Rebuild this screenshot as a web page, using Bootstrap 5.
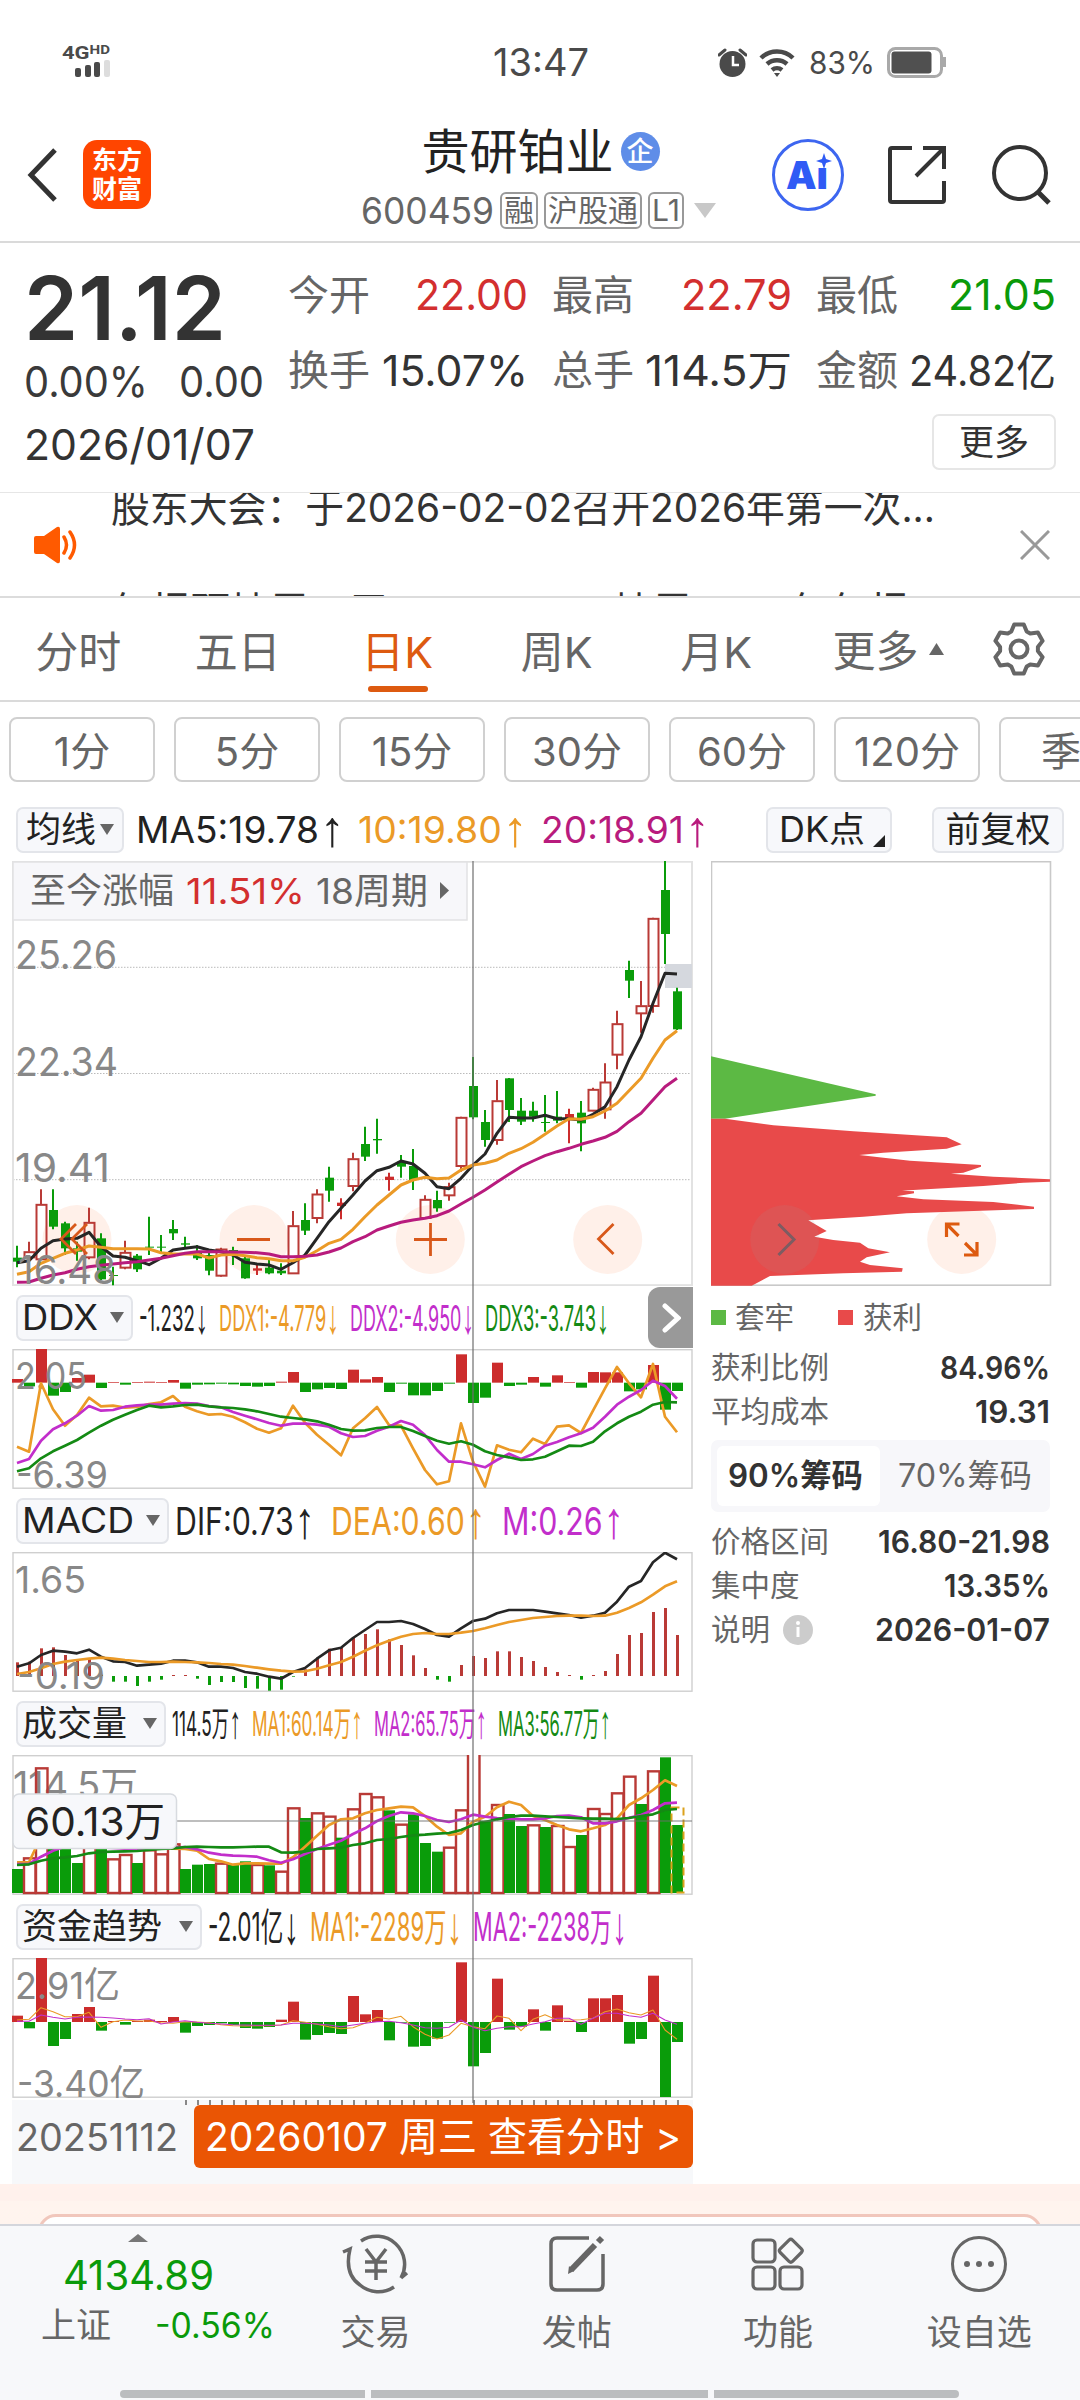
<!DOCTYPE html>
<html lang="zh-CN">
<head>
<meta charset="utf-8">
<meta name="viewport" content="width=device-width, initial-scale=1">
<title>贵研铂业 600459</title>
<link rel="stylesheet" href="https://cdn.jsdelivr.net/npm/bootstrap@5.3.0/dist/css/bootstrap.min.css">
<style>
body{width:1080px;height:2400px;overflow:hidden;background:#fff;color:#333;font-family:Inter,"Noto Sans CJK SC",sans-serif;line-height:1}
svg{display:block;flex:none}
.fit{display:inline-block;white-space:nowrap;flex:none;transform-origin:0 50%}
.c-grey{color:#666}.c-red{color:#d32f2f}.c-green{color:#0a9a0a}.c-orange{color:#eb9a27}.c-mag{color:#b81b7d}.c-pur{color:#c22ecb}.c-dgreen{color:#148a14}.c-ink{color:#222}
.arw{font-family:"Liberation Sans",sans-serif;margin-left:.02em;font-size:1.35em;line-height:0;vertical-align:-.06em}
.statusbar{height:124px;padding-left:62px;color:#4a4a4a}
.sig{width:48px;height:34px}
.sig-t{font:700 19px/15px "Roboto","Liberation Sans",sans-serif}
.sig-t sup{font-size:13px;top:-.35em;line-height:0}
.clock{font-size:38px;margin-left:383px}
.st-right{margin-left:129px}
.topbar{height:119px;padding:0 0 16px 27px;border-bottom:2px solid #dadada}
.em-logo{width:68px;height:69px;border-radius:14px;background:#ff4500;color:#fff;font-size:25px;line-height:29px;font-weight:600;margin-left:24px}
.title-col{width:353px;margin-left:211px;padding-top:7px;gap:16px}
.stock{font-size:48px;color:#222;white-space:nowrap}
.qi{width:39px;height:39px;border-radius:50%;background:#5f8de8;color:#fff;font-size:27px;font-weight:500;margin-left:7px}
.code{font-size:37px;color:#666;height:37px;gap:6px;white-space:nowrap}
.tagbox{border:2px solid #999;border-radius:6px;height:37px;font-size:30px;padding:0 2px;flex:none}
.tri-d{width:0;height:0;border:7px solid transparent;border-bottom:0;border-top:11px solid #666}
.quote{height:250px;padding:21px 24px 0 24px;border-bottom:1px solid #e6e6e6}
.q-top{height:150px}
.price{font-size:88px;font-weight:600;height:88px}
.chg{font-size:42px;margin-top:9px;gap:31px;color:#3a3a3a}
.q-grid{display:grid;grid-template-columns:repeat(3,240px);column-gap:24px;row-gap:33px;width:768px;margin-top:10px;height:118px}
.q-cell{font-size:42px;height:42px}
.q-cell .lab{font-size:41px;color:#666}
.q-date{font-size:43px;padding-top:5px}
.more-btn{width:124px;height:56px;border:2px solid #e6e6e6;border-radius:7px;font-size:35px;background:#fff;color:#333}
.notice{height:105px;border-bottom:2px solid #dcdcdc;overflow:hidden;padding:0 30px 0 33px}
.n-lines{height:103px;overflow:hidden;margin-left:32px;width:860px;font-size:40px}
.n-line{height:104px;flex:none}
.n-line:first-child{margin-top:-5px}
.tabs-k{height:104px;border-bottom:2px solid #dadada;font-size:43px;color:#666;white-space:nowrap}
.tab-k{width:159.5px;height:100%;position:relative;flex:none;padding-top:6px;padding-right:3px}
.tab-k.on{color:#dd5a10}
.tab-k.on::after{content:"";position:absolute;left:49px;bottom:8px;width:60px;height:6px;border-radius:3px;background:#dd5a10}
.mins{padding:15px 0 0 9px;gap:19px;overflow:hidden;font-size:40px;color:#666}
.min-btn{width:146px;height:65px;border:2px solid #d0d0d0;border-radius:8px;flex:none;padding-top:4px}
.ma-row{height:79px;padding:16px 16px 0 16px;font-size:37px}
.chip{background:#f7f8fb;border:2px solid #e3e5ea;border-radius:7px;height:46px;font-size:35px;color:#222;flex:none;white-space:nowrap}
.left-col{width:693px;padding-left:12px;position:relative}
.cross-v{position:absolute;left:472px;top:0;width:2px;height:1242px;background:rgba(110,110,110,.6);z-index:3}
.ind-row{height:63px;padding-left:4px;font-size:36px;position:relative}
.ind-chip{padding:0 7px 0 4px;justify-content:space-between;margin-right:6px}
.next-btn{position:absolute;right:0;top:1px;width:45px;height:61px;background:#999;border-radius:12px 0 0 12px;z-index:2}
.axis{height:84px;margin-top:2px;background:#f7f8fa}
.axis-in{padding-left:4px;height:63px;font-size:38px;color:#666}
.day-btn{width:499px;height:63px;margin-left:16px;background:#ea5504;color:#fff;border-radius:6px;font-size:40px;padding-left:11px}
.right-col{padding-left:18px;width:387px}
.legend{height:60px;font-size:29.5px;color:#666;padding-top:3px}
.sq{width:15px;height:15px}
.st-row{height:44px;width:339px;font-size:29.5px;color:#666}
.st-row b{font-size:31.5px;font-weight:600;color:#333}
.seg{width:339px;height:72px;background:#f7f7fa;border-radius:7px;padding:6px;font-size:32px;margin:6px 0 8px;color:#666}
.seg-on{width:163px;height:60px;background:#fff;border-radius:6px;color:#333;font-weight:600;padding-left:11px}
.promo{height:40px;background:linear-gradient(#fff1ec 0,#fff1ec 17px,#fff4ee 17px);padding:30px 38px 0;overflow:hidden}
.promo-card{height:60px;border:3px solid #f1c7bc;border-radius:18px;background:#fff}
.bottombar{height:176px;border-top:2px solid #d4d6dc;background:#f7f8fa;color:#666}
.idx{width:275px;padding-top:8px;white-space:nowrap}
.nav-c{width:201.3px;font-size:35px;padding-top:8px}
.nav-c span{margin-top:21px}
.home{height:8px;padding:0 120px;gap:6px}
.home i{background:#bbbdbf;height:8px}
.home i:first-child{width:245px;border-radius:4px 0 0 4px}.home i:nth-child(2){width:337px}.home i:last-child{width:245px;border-radius:0 4px 4px 0}
</style>
<script src="https://cdn.jsdelivr.net/npm/bootstrap@5.3.0/dist/js/bootstrap.bundle.min.js"></script>
</head>
<body>
<div class="statusbar d-flex align-items-center">
  <div class="sig"><div class="sig-t"><span class="fit" data-w="48">4G<sup>HD</sup></span></div>
    <svg width="48" height="17" viewBox="0 0 48 17"><g fill="#4a4a4a"><rect x="13" y="8" width="6" height="9" rx="2"/><rect x="23" y="5" width="6" height="12" rx="2"/><rect x="32" y="2" width="6" height="15" rx="2"/><rect x="42" y="0" width="6" height="17" rx="2" fill="#ddd"/></g></svg></div>
  <div class="clock"><span class="fit" data-w="96">13:47</span></div>
  <div class="st-right d-flex align-items-center">
    <svg width="29" height="29" viewBox="0 0 29 29"><circle cx="14.500" cy="16" r="13" fill="#4a4a4a"/><path d="M1 7 7 2M28 7 22 2" stroke="#4a4a4a" stroke-width="3" stroke-linecap="round"/><path d="M15 8v9h6" fill="none" stroke="#fff" stroke-width="2.500"/></svg>
    <svg width="36" height="29" viewBox="0 0 36 29" style="margin:0 14px 0 12px" fill="none" stroke="#4a4a4a" stroke-width="4.500"><path d="M2 10a23 23 0 0 1 32 0M8 16a15 15 0 0 1 20 0M13 22a8 8 0 0 1 10 0"/><path d="M15 25h6l-3 4z" fill="#4a4a4a" stroke="none"/></svg>
    <span class="fit" data-w="66" style="font-size:31px">83%</span>
    <svg width="60" height="31" viewBox="0 0 60 31" style="margin-left:12px"><rect x="1.500" y="1.500" width="53" height="28" rx="7" fill="none" stroke="#a9a9a9" stroke-width="3"/><rect x="4.500" y="4.500" width="40" height="22" rx="3" fill="#505050"/><path d="M57.500 10v10" stroke="#a9a9a9" stroke-width="3"/></svg>
  </div>
</div>

<div class="topbar d-flex align-items-center">
  <svg width="32" height="56" viewBox="0 0 32 56"><path d="M28 3 4 28l24 25" fill="none" stroke="#333" stroke-width="5"/></svg>
  <div class="em-logo d-flex flex-column align-items-center justify-content-center"><span>东方</span><span>财富</span></div>
  <div class="title-col d-flex flex-column align-items-center">
    <div class="stock d-flex align-items-center ps-1">贵研铂业<span class="qi d-flex align-items-center justify-content-center">企</span></div>
    <div class="code d-flex align-items-center"><span class="fit" data-w="133">600459</span>
      <span class="tagbox d-flex align-items-center">融</span><span class="tagbox d-flex align-items-center">沪股通</span><span class="tagbox d-flex align-items-center">L1</span>
      <svg width="22" height="15" viewBox="0 0 22 15" class="ms-1"><path d="M0 0h22L11 15z" fill="#c8c8c8"/></svg></div>
  </div>
  <svg width="74" height="74" viewBox="0 0 74 74" style="margin-left:56px"><circle cx="37" cy="37" r="34.500" fill="#fff" stroke="#3d66f0" stroke-width="3"/><text x="15" y="51" font-family="Inter" font-weight="900" font-size="38" fill="#2f5bf5" textLength="42" lengthAdjust="spacingAndGlyphs">Aı</text><path d="M53 15l2 6 6 2-6 2-2 6-2-6-6-2 6-2z" fill="#2f5bf5"/></svg>
  <svg width="60" height="60" viewBox="0 0 60 60" style="margin-left:42px" fill="none" stroke="#333" stroke-width="4"><path d="M25 3H5q-2 0-2 2v50q0 2 2 2h50q2 0 2-2V36M36 3h21v21M57 3 29 31"/></svg>
  <svg width="60" height="60" viewBox="0 0 60 60" style="margin-left:45px" fill="none" stroke="#333" stroke-width="4"><circle cx="28" cy="28" r="26"/><path d="M46 47 57 58" stroke-width="5"/></svg>
</div>

<div class="quote">
  <div class="q-top d-flex justify-content-between">
    <div>
      <div class="price"><span class="fit" data-w="202">21.12</span></div>
      <div class="chg d-flex"><span class="fit" data-w="124">0.00%</span><span class="fit" data-w="85">0.00</span></div>
    </div>
    <div class="q-grid">
      <div class="q-cell d-flex justify-content-between align-items-center"><span class="lab">今开</span><span class="fit c-red" data-w="113">22.00</span></div>
      <div class="q-cell d-flex justify-content-between align-items-center"><span class="lab">最高</span><span class="fit c-red" data-w="111">22.79</span></div>
      <div class="q-cell d-flex justify-content-between align-items-center"><span class="lab">最低</span><span class="fit c-green" data-w="108">21.05</span></div>
      <div class="q-cell d-flex justify-content-between align-items-center"><span class="lab">换手</span><span class="fit" data-w="146">15.07%</span></div>
      <div class="q-cell d-flex justify-content-between align-items-center"><span class="lab">总手</span><span class="fit" data-w="147">114.5万</span></div>
      <div class="q-cell d-flex justify-content-between align-items-center"><span class="lab">金额</span><span class="fit" data-w="147">24.82亿</span></div>
    </div>
  </div>
  <div class="d-flex justify-content-between align-items-center"><div class="q-date"><span class="fit" data-w="231">2026/01/07</span></div>
    <button class="more-btn btn p-0">更多</button></div>
</div>

<div class="notice d-flex align-items-center">
  <svg width="46" height="38" viewBox="0 0 46 38"><path d="M1 12q0-2 2-2h8L24 1q3-1 3 2v32q0 3-3 2L11 28H3q-2 0-2-2z" fill="#ff5a00"/><path d="M31 11q5 8 0 16M37 6q9 13 0 26" fill="none" stroke="#ff5a00" stroke-width="3.500" stroke-linecap="round"/></svg>
  <div class="n-lines d-flex flex-column"><div class="n-line"><span class="fit" data-w="824">股东大会：于2026-02-02召开2026年第一次...</span></div><div class="n-line"><span class="fit" data-w="798">年报预披露：于2026-03-31披露2025年年报</span></div></div>
  <svg width="30" height="30" viewBox="0 0 30 30" class="ms-auto"><path d="M1 1 29 29M29 1 1 29" stroke="#999" stroke-width="3"/></svg>
</div>

<div class="tabs-k d-flex align-items-center">
  <div class="tab-k d-flex align-items-center justify-content-center">分时</div><div class="tab-k d-flex align-items-center justify-content-center">五日</div><div class="tab-k on d-flex align-items-center justify-content-center">日K</div><div class="tab-k d-flex align-items-center justify-content-center">周K</div><div class="tab-k d-flex align-items-center justify-content-center">月K</div>
  <span class="pt-1" style="margin-left:35px">更多</span><svg width="15" height="12" viewBox="0 0 15 12" style="margin-left:10px"><path d="M7.500 0 15 12H0z" fill="#666"/></svg>
  <svg id="gear" width="54" height="54" viewBox="-27 -27 54 54" class="ms-5" fill="none" stroke="#666" stroke-width="4" stroke-linejoin="round"></svg>
</div>
<div class="mins d-flex">
  <div class="min-btn d-flex align-items-center justify-content-center">1分</div><div class="min-btn d-flex align-items-center justify-content-center">5分</div><div class="min-btn d-flex align-items-center justify-content-center">15分</div><div class="min-btn d-flex align-items-center justify-content-center">30分</div><div class="min-btn d-flex align-items-center justify-content-center">60分</div><div class="min-btn d-flex align-items-center justify-content-center">120分</div><div class="min-btn d-flex align-items-center ps-4"><span class="ps-3">季</span></div>
</div>
<div class="ma-row d-flex align-items-center">
  <div class="chip d-flex align-items-center px-2" style="width:108px">均线<i class="tri-d ms-1"></i></div>
  <div class="d-flex" style="gap:13px;margin-left:12px"><span class="fit c-ink" data-w="209">MA5:19.78<span class="arw">↑</span></span><span class="fit c-orange" data-w="170">10:19.80<span class="arw">↑</span></span><span class="fit c-mag" data-w="169">20:18.91<span class="arw">↑</span></span></div>
  <div class="chip d-flex align-items-center ms-auto" style="width:126px;padding-left:11px"><span class="fit" data-w="86">DK点</span><svg width="12" height="12" viewBox="0 0 12 12" class="align-self-end ms-2 mb-1"><path d="M12 0v12H0z" fill="#222"/></svg></div>
  <div class="chip d-flex align-items-center justify-content-center" style="width:132px;margin-left:40px">前复权</div>
</div>

<div class="d-flex">
  <div class="left-col">
    <div class="cross-v"></div>
    <svg id="kline" width="681" height="425" viewBox="12 861 681 425"></svg>
    <div class="ind-row d-flex align-items-center"><div class="chip ind-chip d-flex align-items-center" style="width:117px"><span class="fit" data-w="76">DDX</span><i class="tri-d"></i></div>
      <div class="d-flex" style="gap:11px"><span class="fit c-ink" data-w="69">-1.232<span class="arw">↓</span></span><span class="fit c-orange" data-w="120">DDX1:-4.779<span class="arw">↓</span></span><span class="fit c-pur" data-w="124">DDX2:-4.950<span class="arw">↓</span></span><span class="fit c-dgreen" data-w="124">DDX3:-3.743<span class="arw">↓</span></span></div>
      <div class="next-btn d-flex align-items-center justify-content-center"><svg width="20" height="32" viewBox="0 0 20 32"><path d="M4 4 17 16 4 28" fill="none" stroke="#fff" stroke-width="5" stroke-linecap="round"/></svg></div></div>
    <svg id="ddx" width="681" height="140" viewBox="12 1349 681 140"></svg>
    <div class="ind-row d-flex align-items-center"><div class="chip ind-chip d-flex align-items-center" style="width:153px"><span class="fit" data-w="112">MACD</span><i class="tri-d"></i></div>
      <div class="d-flex" style="gap:16px;font-size:38px"><span class="fit c-ink" data-w="140">DIF:0.73<span class="arw">↑</span></span><span class="fit c-orange" data-w="155">DEA:0.60<span class="arw">↑</span></span><span class="fit c-pur" data-w="122">M:0.26<span class="arw">↑</span></span></div></div>
    <svg id="macd" width="681" height="140" viewBox="12 1552 681 140"></svg>
    <div class="ind-row d-flex align-items-center"><div class="chip ind-chip d-flex align-items-center" style="width:150px"><span>成交量</span><i class="tri-d"></i></div>
      <div class="d-flex" style="gap:11px;font-size:34px"><span class="fit c-ink" data-w="69">114.5万<span class="arw">↑</span></span><span class="fit c-orange" data-w="111">MA1:60.14万<span class="arw">↑</span></span><span class="fit c-pur" data-w="113">MA2:65.75万<span class="arw">↑</span></span><span class="fit c-dgreen" data-w="113">MA3:56.77万<span class="arw">↑</span></span></div></div>
    <svg id="vol" width="681" height="140" viewBox="12 1755 681 140"></svg>
    <div class="ind-row d-flex align-items-center"><div class="chip ind-chip d-flex align-items-center" style="width:186px"><span>资金趋势</span><i class="tri-d"></i></div>
      <div class="d-flex" style="gap:11px;font-size:39px"><span class="fit c-ink" data-w="91">-2.01亿<span class="arw">↓</span></span><span class="fit c-orange" data-w="152">MA1:-2289万<span class="arw">↓</span></span><span class="fit c-pur" data-w="154">MA2:-2238万<span class="arw">↓</span></span></div></div>
    <svg id="fund" width="681" height="140" viewBox="12 1958 681 140"></svg>
    <div class="axis"><svg id="ticks" width="681" height="5" viewBox="12 2100 681 5"></svg>
      <div class="axis-in d-flex align-items-center"><span class="fit" data-w="162">20251112</span><div class="day-btn d-flex align-items-center"><span class="fit" data-w="476">20260107 周三 查看分时 &gt;</span></div></div></div>
  </div>
  <div class="right-col">
    <svg id="chips" width="341" height="425" viewBox="711 861 341 425"></svg>
    <div class="legend d-flex align-items-center"><i class="sq" style="background:#5cb944"></i><span style="margin-left:9px">套牢</span><i class="sq" style="background:#e84a4a;margin-left:44px"></i><span style="margin-left:10px">获利</span></div>
    <div class="st-row d-flex align-items-center justify-content-between">获利比例<b class="fit" data-w="110">84.96%</b></div>
    <div class="st-row d-flex align-items-center justify-content-between">平均成本<b class="fit" data-w="75">19.31</b></div>
    <div class="seg d-flex align-items-center"><div class="seg-on d-flex align-items-center"><span class="fit" data-w="135">90%筹码</span></div><span class="fit" style="margin-left:18px" data-w="134">70%筹码</span></div>
    <div class="st-row d-flex align-items-center justify-content-between">价格区间<b class="fit" data-w="172">16.80-21.98</b></div>
    <div class="st-row d-flex align-items-center justify-content-between">集中度<b class="fit" data-w="106">13.35%</b></div>
    <div class="st-row d-flex align-items-center">说明<svg width="30" height="30" viewBox="0 0 30 30" style="margin-left:13px"><circle cx="15" cy="15" r="15" fill="#ccc"/><path d="M15 12v10" stroke="#fff" stroke-width="3"/><circle cx="15" cy="8" r="2" fill="#fff"/></svg><b class="fit ms-auto" data-w="175">2026-01-07</b></div>
  </div>
</div>

<div class="promo"><div class="promo-card"></div></div>
<div class="bottombar d-flex flex-column">
  <div class="d-flex" style="height:164px">
    <div class="idx"><svg width="20" height="8" viewBox="0 0 20 8" style="margin-left:128px"><path d="M10 0 20 8H0z" fill="#777"/></svg>
      <div class="c-green" style="font-size:41px;margin:13px 0 0 63px"><span class="fit" data-w="151">4134.89</span></div>
      <div class="d-flex" style="font-size:35px;margin:12px 0 0 41px"><span>上证</span><span class="fit c-green" style="margin-left:44px" data-w="120">-0.56%</span></div></div>
    <div class="nav-c d-flex flex-column align-items-center"><svg width="68" height="60" viewBox="0 0 68 60" fill="none" stroke="#666" stroke-width="3.500"><path d="M19 7A28 28 0 0 1 59 44M1 18 8 15Q2 40 18 51A28 28 0 0 0 52 53M59 44l6-5" /><path d="M24 15 34 28 44 15M34 28V46M23 28H45M23 37H45"/></svg><span>交易</span></div>
    <div class="nav-c d-flex flex-column align-items-center"><svg width="60" height="60" viewBox="0 0 60 60" fill="none" stroke="#666" stroke-width="3.500"><path d="M42 4H10Q4 4 4 10V50Q4 56 10 56H50Q56 56 56 50V20"/><path d="M24 36 48 11" stroke-width="6"/><path d="M21 40l1-8 5 5z" fill="#666" stroke="none"/><path d="M51 8l4-4" stroke-width="6"/></svg><span>发帖</span></div>
    <div class="nav-c d-flex flex-column align-items-center"><svg width="60" height="60" viewBox="0 0 60 60" fill="none" stroke="#666" stroke-width="3.200"><rect x="5" y="6" width="22" height="22" rx="4"/><rect x="5" y="33" width="22" height="22" rx="4"/><rect x="32" y="33" width="22" height="22" rx="4"/><rect x="34" y="8" width="17.500" height="17.500" rx="2.500" transform="rotate(45 42.800 16.800)"/></svg><span>功能</span></div>
    <div class="nav-c d-flex flex-column align-items-center"><svg width="60" height="60" viewBox="0 0 60 60"><circle cx="30" cy="30" r="26.500" fill="none" stroke="#666" stroke-width="3"/><g fill="#666"><circle cx="18" cy="30" r="3"/><circle cx="30" cy="30" r="3"/><circle cx="42" cy="30" r="3"/></g></svg><span>设自选</span></div>
  </div>
  <div class="home d-flex"><i></i><i></i><i></i></div>
</div>

<script>
// Squeeze or stretch each numeric label to the width of its slot
document.querySelectorAll('.fit').forEach(function(e){
  var w=+e.dataset.w,m=e.getBoundingClientRect().width;
  e.style.transform='scaleX('+(w/m)+')';e.style.marginRight=(w-m)+'px';
});
var G='#0a9c0a',R='#b93a36',RF='#cc2c2c',OR='#eb9a27',BK='#262626',MG='#b81b7d',PU='#c22ecb',GN='#148a14';
function X(i){return 17+12*i}
function put(id,s){document.getElementById(id).innerHTML=s}
function line(a,y0,c,w){return '<polyline fill="none" stroke="'+c+'" stroke-width="'+w+'" stroke-linejoin="round" points="'+a.map(function(v,i){return X(i)+','+(y0+v/3).toFixed(1)}).join(' ')+'"/>'}
function rect(x,y,w,h,f,ex){return '<rect x="'+x+'" y="'+y.toFixed(2)+'" width="'+w+'" height="'+Math.max(h,.7).toFixed(2)+'" fill="'+f+'" '+(ex||'')+'/>'}
function label(t,x,y,w,s,c){return '<text x="'+(x-1)+'" y="'+y+'" font-size="'+(s||38)+'" fill="'+(c||'#888')+'" textLength="'+(w+2)+'" lengthAdjust="spacingAndGlyphs">'+t+'</text>'}
function frame(y,h,c,w){return '<rect x="13" y="'+(y+.7)+'" width="679" height="'+(h-1.5)+'" fill="none" stroke="'+c+'" stroke-width="'+w+'"/>'}
function bars(a,y0,z,w){return a.map(function(v,i){var up=v<z,t=up?v:z;return rect(X(i)-(w==3?1:5),y0+t/3,w,Math.abs(v-z)/3,up?(w==3?R:RF):G)}).join('')}

// Daily candles: kind, high, body top, body bottom, low
var K=[['g',1187,1223,1235,1252],['r',1175,1205,1222,1228],['r',1018,1063,1228,1230],['g',1018,1080,1130,1138],['g',1115,1120,1195,1215],['g',1175,1195,1205,1232],['r',1073,1117,1222,1228],['g',1150,1165,1288,1290],['g',1250,1275,1278,1306],['r',1172,1207,1253,1258],['g',1212,1217,1258,1266],['g',1100,1190,1193,1215],['g',1155,1190,1193,1210],['g',1110,1137,1150,1170],['g',1160,1180,1184,1192],['g',1185,1205,1225,1230],['g',1205,1215,1262,1276],['r',1193,1197,1277,1280],['g',1190,1200,1210,1245],['g',1220,1225,1285,1286],['f',1245,1255,1262,1275],['g',1225,1253,1270,1273],['g',1240,1262,1270,1275],['r',1083,1127,1270,1272],['g',1060,1110,1142,1155],['r',1018,1032,1104,1120],['g',950,983,1022,1055],['f',1045,1058,1068,1108],['r',908,926,1008,1024],['g',830,882,920,933],['g',806,867,871,911],['f',968,980,990,1022],['g',915,935,950,983],['g',897,948,990,1020],['r',1036,1048,1104,1106],['g',1022,1050,1075,1085],['r',998,1010,1036,1052],['r',800,802,948,965],['g',621,708,802,808],['g',780,816,870,890],['r',690,752,870,884],['g',684,685,780,816],['g',744,782,815,825],['g',755,782,800,815],['g',735,816,819,845],['g',723,800,812,820],['f',776,792,806,880],['g',753,788,820,904],['r',713,718,782,784],['r',640,696,778,806],['r',482,521,614,658],['g',332,360,392,444],['r',393,467,490,548],['r',203,205,468,488],['g',33,120,252,342],['g',413,424,538,540]];
var s='<rect x="12" y="861" width="681" height="425" fill="#fff"/>';
[967.3,1073.5,1179.7].forEach(function(y){s+='<path d="M13 '+y+'H692" stroke="#bbb" stroke-width="1" stroke-dasharray="1.500 1.500"/>'});
s+=frame(861,425,'#e2e2e2',2);
s+='<rect x="665" y="964" width="27" height="24" fill="#d5d8de"/>';
[77,254,430.3,607.7].forEach(function(x){s+='<circle cx="'+x+'" cy="1239.500" r="34.500" fill="#fff0e9"/>'});
K.forEach(function(k,i){var x=X(i),y=function(v){return 850+v/3},c=k[0]=='g'?G:k[0]=='f'?RF:R;
  if(k[0]=='r'){s+='<path d="M'+x+' '+y(k[1])+'V'+y(k[2])+'M'+x+' '+y(k[3])+'V'+y(k[4])+'" stroke="'+c+'" stroke-width="2"/>'+rect(x-4.5,y(k[2])+.5,10,(k[3]-k[2])/3-.5,'none','stroke="'+c+'" stroke-width="2"')}
  else s+='<path d="M'+x+' '+y(k[1])+'V'+y(k[4])+'" stroke="'+c+'" stroke-width="2"/>'+rect(x-4,y(k[2]),9,(k[3]-k[2])/3,c)});
s+=line([1238,1232,1195,1172,1167,1165,1147,1190,1218,1222,1232,1244,1225,1200,1195,1190,1200,1205,1215,1237,1242,1245,1258,1238,1215,1165,1115,1075,1035,993,962,952,933,942,970,1010,1016,985,945,912,850,802,804,804,796,806,806,810,793,770,710,630,560,460,370,372],850,BK,3);
s+=line([1273,1265,1240,1225,1210,1200,1188,1192,1196,1196,1196,1197,1208,1212,1212,1212,1224,1215,1213,1217,1223,1226,1232,1232,1222,1202,1180,1168,1138,1100,1065,1035,1005,990,982,986,984,960,945,940,930,910,896,877,853,828,806,808,800,783,760,722,685,625,570,542],850,OR,3);
s+=line([1297,1296,1285,1275,1268,1258,1250,1246,1242,1238,1235,1230,1225,1217,1210,1205,1205,1205,1206,1207,1208,1212,1220,1220,1219,1215,1206,1194,1175,1160,1140,1128,1117,1110,1105,1097,1083,1062,1042,1020,996,973,950,933,917,905,895,883,873,862,844,815,790,750,710,685],850,MG,3);
s+='<g fill="none" stroke="#d8581a" stroke-width="2.800"><path d="M76 1224 61 1239 76 1254M87 1224 72 1239 87 1254M237 1239.500h33M414 1239.500h33M430.500 1223v33M613.500 1224 598.500 1239 613.500 1254"/></g>';
s+=label('25.26',16,969,100,40)+label('22.34',16,1076,101,40)+label('19.41',16,1182,93,40)+label('16.48',19,1284,96,40);
s+='<rect x="13" y="862" width="454" height="58" fill="#f7f7fa" stroke="#e2e2e4" stroke-width="1.500"/>'+label('至今涨幅',31,903,142,35,'#666')+label('11.51%',187,904,117,36,'#d32f2f')+label('18周期',317,904,110,36,'#666')+'<path d="M440 882v17l9-8.500z" fill="#666"/>';
put('kline',s);

put('ddx',frame(1349,140,'#cfcfcf',1.4)+bars([297,319,207,347,336,294,284,324,306,314,306,305,306,300,326,314,313,311,313,318,320,318,305,276,336,328,324,327,269,298,291,336,311,346,346,333,311,223,369,353,248,318,314,291,320,286,306,323,276,277,277,334,328,255,389,333],1280,308,11)
+label('2.05',16,1389,70,37)+label('-6.39',17,1488,90,37)
+line([500,515,310,388,437,405,353,379,377,383,381,372,367,348,380,394,404,402,410,427,446,458,445,377,428,464,494,526,445,415,381,435,437,505,570,613,604,430,545,620,496,509,517,476,492,440,436,459,392,325,261,310,352,252,410,457],1280,OR,2.7)
+line([549,537,482,448,430,407,378,392,390,380,376,374,374,371,369,371,378,382,396,407,418,429,437,431,431,434,440,460,471,468,452,440,423,434,465,510,545,545,553,562,540,521,537,522,497,486,472,460,443,410,374,350,330,302,318,356],1280,PU,2.7)
+line([574,565,535,514,497,480,458,437,419,404,390,377,382,379,375,374,379,382,384,388,394,402,410,414,418,424,434,447,452,451,444,441,441,453,468,482,491,484,494,514,525,532,540,538,530,514,497,498,485,454,430,410,395,374,366,367],1280,GN,2.7));

put('macd',frame(1552,140,'#cfcfcf',1.4)+bars([1147,1145,1105,1102,1125,1140,1135,1184,1205,1205,1218,1205,1199,1185,1185,1196,1215,1206,1206,1224,1226,1232,1229,1190,1168,1133,1106,1102,1074,1062,1048,1078,1095,1126,1164,1199,1205,1155,1128,1134,1114,1114,1131,1143,1161,1176,1185,1199,1185,1173,1122,1065,1059,996,984,1065],1280,1188,3)
+line([1160,1150,1125,1112,1115,1120,1109,1130,1144,1146,1157,1154,1151,1142,1142,1147,1160,1160,1164,1176,1181,1190,1196,1176,1164,1136,1111,1103,1074,1050,1026,1026,1023,1032,1047,1065,1070,1045,1023,1016,1000,990,990,990,995,1000,1005,1013,1007,998,965,920,903,847,818,838],1280,BK,2.7)
+line([1182,1176,1165,1152,1145,1140,1136,1133,1136,1140,1143,1146,1146,1145,1146,1147,1149,1152,1154,1158,1163,1168,1172,1175,1174,1166,1156,1146,1130,1112,1096,1082,1070,1062,1059,1062,1062,1058,1053,1045,1035,1026,1020,1014,1011,1008,1007,1007,1008,1007,998,984,967,944,919,904],1280,OR,2.7)
+label('1.65',16,1593,69,37)+label('-0.19',18,1689,86,37));

// Volume: positive entries close up (hollow red), negative close down (solid green)
var V=[-537,502,232,-450,-460,-519,400,-470,505,492,-519,478,490,460,-537,-524,-522,518,-524,-514,522,-526,542,352,-384,367,377,-443,355,309,319,-361,401,-373,-459,-485,470,358,180,-392,342,-372,-408,403,-411,405,468,-435,354,369,307,257,-342,241,-202,-405];
s=frame(1755,140,'#cfcfcf',1.4)+label('114.5万',14,1799,123,38);
V.forEach(function(v,i){var y=1690+Math.abs(v)/3;s+=v<0?rect(X(i)-5,y,11,1893-y,G):rect(X(i)-5,y+1,11.5,1892-y,i==2?'none':'#fff','stroke="'+R+'" stroke-width="2.400"')});
s+='<rect x="671.500" y="1807.500" width="12" height="85" fill="none" stroke="#dca21c" stroke-width="2" stroke-dasharray="8 4"/>';
s+=line([517,517,440,400,400,405,420,450,470,475,478,475,476,476,477,482,507,514,524,520,520,521,521,502,470,437,405,388,385,370,360,355,350,352,378,410,435,430,395,380,352,335,345,378,390,405,418,424,415,405,385,345,325,300,271,288],1690,OR,2.7)
+line([522,522,500,482,470,468,470,472,474,476,477,475,475,473,471,478,488,494,497,498,500,511,518,508,492,477,464,452,432,415,393,378,367,370,378,390,396,388,374,380,384,386,388,388,385,378,377,382,400,400,394,383,375,360,340,338],1690,PU,2.7)
+line([525,523,512,505,502,498,490,486,485,484,483,480,477,475,471,470,471,472,472,471,470,470,487,488,484,477,475,473,465,460,450,447,441,436,434,431,429,420,405,396,388,381,377,377,379,381,383,385,386,386,387,384,378,373,360,357],1690,GN,2.7)
+'<path d="M177 1821H692" stroke="#6e6e6e" stroke-opacity=".6" stroke-width="1.600"/><rect x="13" y="1794" width="163.500" height="54.500" rx="6" fill="#f7f8fb" stroke="#d8dbe0" stroke-width="1.500"/>'+label('60.13万',26,1836,138,40,'#222');
put('vol',s);

put('fund',frame(1958,140,'#cfcfcf',1.4)+bars([977,1015,804,1068,1047,972,951,1022,993,1004,993,989,993,981,1028,1008,1005,1000,1005,1014,1016,1011,989,935,1049,1035,1029,1032,918,973,960,1051,998,1070,1068,1046,998,817,1129,1089,866,1019,1010,958,1022,946,993,1026,925,925,915,1061,1047,857,1221,1056],1690,996,11)
+line([990,988,953,965,980,980,967,1012,995,990,993,993,998,1000,995,996,998,1004,1007,1008,1007,1007,1005,992,997,1003,1010,1016,1013,1000,982,987,979,1010,1033,1047,1035,1000,1010,1016,978,985,1022,988,974,990,990,989,985,965,957,968,975,960,1020,1048],1690,OR,1.1)
+line([994,994,975,982,987,982,981,982,984,987,989,986,1002,996,992,997,1000,1002,1004,1005,1006,1006,1005,1000,1000,1002,1005,1010,1005,1000,995,994,998,1005,1013,1015,1012,990,1012,1022,1015,1010,1010,1002,995,985,985,1003,985,970,970,977,982,970,990,1003],1690,PU,1.1)
+label('2.91亿',16,1999,103,37)+label('-3.40亿',18,2097,126,37));

s='';for(var i=14;i<56;i++)s+=rect(X(i),2100,2,5,'#888');
put('ticks',s);

function poly(p,c){return '<polygon fill="'+c+'" points="'+p.map(function(q){return (690+q[0]/3).toFixed(1)+','+(850+q[1]/3).toFixed(1)}).join(' ')+'"/>'}
put('chips','<rect x="711.500" y="861.700" width="339" height="423.500" fill="#fff" stroke="#c9c9c9" stroke-width="1.600"/><circle cx="961.700" cy="1239.500" r="34.500" fill="#fff0e9"/>'
+poly([[62,619],[557,733],[557,737],[105,806],[62,806]],'#5cb944')
+poly([[62,806],[105,806],[250,826],[490,844],[770,862],[815,883],[770,896],[580,908],[508,915],[660,932],[873,945],[873,950],[820,968],[783,971],[910,980],[1080,988],[1080,995],[1000,998],[880,1008],[670,1020],[636,1022],[672,1024],[672,1030],[620,1039],[700,1048],[910,1056],[1032,1070],[1032,1077],[940,1080],[650,1090],[520,1100],[365,1110],[355,1111],[410,1143],[373,1160],[430,1170],[510,1178],[535,1195],[600,1207],[530,1222],[510,1235],[540,1245],[638,1255],[636,1265],[460,1270],[240,1278],[185,1307],[62,1307]],'#e84a4a')
+'<circle cx="784.700" cy="1239.500" r="34.500" fill="#999" fill-opacity=".12"/><path d="M778.500 1224 794 1239.500 778.500 1255" fill="none" stroke="#7d5c62" stroke-width="3"/>'
+'<path d="M946.500 1237v-13h13M947 1224.500l11.500 11.500M977 1242v13h-13M976.500 1254.500 965 1243" fill="none" stroke="#dd5a10" stroke-width="3.200"/>');

var d='';for(i=0;i<6;i++)[[-24,19],[-11,25],[11,25],[24,19]].forEach(function(p){var a=(i*60-90+p[0])*Math.PI/180;d+=(d?'L':'M')+(p[1]*Math.cos(a)).toFixed(1)+' '+(p[1]*Math.sin(a)).toFixed(1)});
put('gear','<path d="'+d+'Z"/><circle r="8.500"/>');
</script>
</body>
</html>
